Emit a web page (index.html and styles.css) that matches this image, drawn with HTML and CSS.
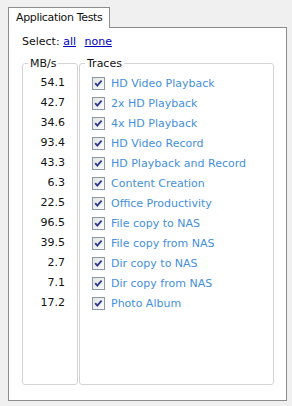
FILE: index.html
```html
<!DOCTYPE html>
<html lang="en">
<head>
    <meta charset="UTF-8">
    <title>Application Tests</title>
    <link rel="stylesheet" href="styles.css">
</head>
<body>
    <div class="tabs">
        <div class="tab">Application Tests</div>
    </div>
    <div class="panel">
        <div class="select-line">Select: <a href="#">all</a> <a href="#" class="none-link">none</a></div>
        <div class="groups">
            <fieldset class="rates">
                <legend>MB/s</legend>
                <ul class="rate-list">
                    <li>54.1</li>
                    <li>42.7</li>
                    <li>34.6</li>
                    <li>93.4</li>
                    <li>43.3</li>
                    <li>6.3</li>
                    <li>22.5</li>
                    <li>96.5</li>
                    <li>39.5</li>
                    <li>2.7</li>
                    <li>7.1</li>
                    <li>17.2</li>
                </ul>
            </fieldset>
            <fieldset class="traces">
                <legend>Traces</legend>
                <ul id="traceList" class="trace-list"></ul>
            </fieldset>
        </div>
    </div>

    <script>
        const traces = [
            "HD Video Playback",
            "2x HD Playback",
            "4x HD Playback",
            "HD Video Record",
            "HD Playback and Record",
            "Content Creation",
            "Office Productivity",
            "File copy to NAS",
            "File copy from NAS",
            "Dir copy to NAS",
            "Dir copy from NAS",
            "Photo Album"
        ];
        const box = '<svg class="check" width="13" height="13" viewBox="0 0 13 13">' +
            '<defs><linearGradient id="g" x1="0" y1="0" x2="1" y2="1">' +
            '<stop offset="0" stop-color="#e2e2de"/><stop offset="1" stop-color="#fdfdfd"/></linearGradient></defs>' +
            '<rect x="0.5" y="0.5" width="12" height="12" fill="url(#g)" stroke="#8a97ad"/>' +
            '<path d="M3.2 6.2 L5.3 8.6 L9.6 3.6" fill="none" stroke="#2e3a8e" stroke-width="1.8"/></svg>';
        document.getElementById('traceList').innerHTML =
            traces.map(t => `<li>${box}<span>${t}</span></li>`).join('');
    </script>
</body>
</html>
```

FILE: styles.css
```css
body {
    margin: 0;
    padding: 7px 5px 0 8px;
    background-color: #f0f0f0;
    font-family: "DejaVu Sans", Verdana, sans-serif;
    font-size: 11px;
    color: #111;
}
.tabs {
    display: flex;
}
.tab {
    position: relative;
    z-index: 1;
    margin-bottom: -1px;
    padding: 0 7px;
    line-height: 20px;
    letter-spacing: -0.35px;
    background: #fff;
    border: 1px solid #8c8c8c;
    border-bottom: none;
}
.panel {
    box-sizing: border-box;
    height: 374px;
    padding: 7px 12px 0 13px;
    background: #fff;
    border: 1px solid #8c8c8c;
}
.select-line {
    line-height: 14px;
}
.select-line a {
    color: #0000c0;
}
.none-link {
    margin-left: 5px;
}
.groups {
    display: flex;
    gap: 1px;
    margin-top: 8px;
}
fieldset {
    box-sizing: border-box;
    height: 328px;
    margin: 0;
    padding: 0 0 0 5px;
    border: 1px solid #d4d4d4;
    border-radius: 3px;
}
legend {
    padding: 0 2px;
    line-height: 13px;
}
.rates {
    width: 56px;
}
.traces {
    width: 195px;
}
ul {
    list-style-type: none;
    margin: 0;
    padding: 3px 0 0 0;
}
.rate-list {
    padding-right: 12px;
    text-align: right;
}
.rate-list li {
    line-height: 20px;
}
.trace-list {
    padding-left: 7px;
}
.trace-list li {
    display: flex;
    align-items: center;
    gap: 6px;
    height: 20px;
    color: #4490dc;
    white-space: nowrap;
}
.check {
    flex: none;
}
```
